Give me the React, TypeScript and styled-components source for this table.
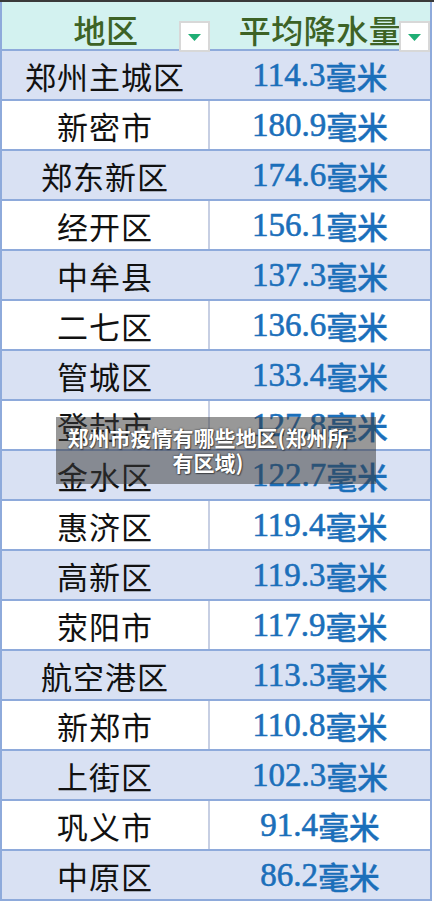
import styled, { createGlobalStyle } from "styled-components";

const GlobalStyle = createGlobalStyle`
  html, body {
    margin: 0;
    padding: 0;
    background: #ffffff;
  }
  * {
    box-sizing: border-box;
  }
`;

const lineBlue = "#8eaadb";
const rowBlue = "#d9e1f3";
const headerCyan = "#d3f2f0";

const Page = styled.div`
  position: relative;
  width: 434px;
  height: 902px;
  overflow: hidden;
  font-family: "Liberation Serif", "Noto Sans CJK SC", serif;
`;

const TopBar = styled.div`
  height: 2px;
  background: #3a3a3a;
`;

const Sheet = styled.div`
  width: 432px;
  border-left: 2px solid ${lineBlue};
  border-right: 2px solid ${lineBlue};
  display: flex;
  flex-direction: column;
`;

const HeaderRow = styled.div`
  display: grid;
  grid-template-columns: 208px 1fr;
  height: 49px;
  background: ${headerCyan};
  border-bottom: 2px solid ${lineBlue};
`;

const HeaderCell = styled.div`
  position: relative;
  display: flex;
  align-items: center;
  justify-content: center;
  padding-top: 4px;
  color: #3d6326;
  font-size: 32px;
  font-weight: 500;
  letter-spacing: 0.5px;
`;

const FilterButton = styled.div`
  position: absolute;
  right: 0;
  bottom: 0;
  width: 31px;
  height: 31px;
  background: #ffffff;
  border: 2px solid #d8d8d8;
  display: flex;
  align-items: center;
  justify-content: center;
  padding-top: 2px;
`;

const Row = styled.div<{ $shaded: boolean }>`
  display: grid;
  grid-template-columns: 208px 1fr;
  height: 50px;
  background: ${(p) => (p.$shaded ? rowBlue : "#ffffff")};
  border-bottom: 2px solid ${lineBlue};
`;

const NameCell = styled.div<{ $shaded: boolean }>`
  display: flex;
  align-items: center;
  justify-content: center;
  border-right: 2px solid ${(p) => (p.$shaded ? rowBlue : "#c7cfe3")};
  color: #111111;
  font-size: 31px;
  letter-spacing: 1px;
`;

const ValueCell = styled.div`
  display: flex;
  align-items: center;
  justify-content: center;
  color: #1b6fba;
  font-size: 33px;
  font-weight: 400;
  -webkit-text-stroke: 0.6px #1b6fba;
`;

const Unit = styled.span`
  font-size: 31px;
  font-weight: 500;
  -webkit-text-stroke: 0.3px #1b6fba;
`;

const Caption = styled.div`
  position: absolute;
  left: 56px;
  top: 417px;
  width: 320px;
  height: 67px;
  padding: 8px 24px 8px 8px;
  background: rgba(58, 58, 58, 0.52);
  color: #ffffff;
  font-family: "Noto Sans CJK SC", "Noto Sans", sans-serif;
  font-weight: 700;
  font-size: 21px;
  line-height: 25px;
  text-align: center;
  text-shadow: 0 0 2px rgba(0, 0, 0, 0.7), 1px 1px 1px rgba(0, 0, 0, 0.4);
`;

const FilterArrow = () => (
  <svg width="13" height="7" viewBox="0 0 13 7">
    <path d="M0 0 H13 L6.5 7 Z" fill="#1fae74" />
  </svg>
);

const rows: [string, string][] = [
  ["郑州主城区", "114.3"],
  ["新密市", "180.9"],
  ["郑东新区", "174.6"],
  ["经开区", "156.1"],
  ["中牟县", "137.3"],
  ["二七区", "136.6"],
  ["管城区", "133.4"],
  ["登封市", "127.8"],
  ["金水区", "122.7"],
  ["惠济区", "119.4"],
  ["高新区", "119.3"],
  ["荥阳市", "117.9"],
  ["航空港区", "113.3"],
  ["新郑市", "110.8"],
  ["上街区", "102.3"],
  ["巩义市", "91.4"],
  ["中原区", "86.2"],
];

const App = () => {
  return (
    <>
      <GlobalStyle />
      <Page>
        <TopBar />
        <Sheet>
          <HeaderRow>
            <HeaderCell>
              地区
              <FilterButton>
                <FilterArrow />
              </FilterButton>
            </HeaderCell>
            <HeaderCell>
              平均降水量
              <FilterButton>
                <FilterArrow />
              </FilterButton>
            </HeaderCell>
          </HeaderRow>
          {rows.map(([name, value], i) => {
            const shaded = i % 2 === 0;
            return (
              <Row key={name} $shaded={shaded}>
                <NameCell $shaded={shaded}>{name}</NameCell>
                <ValueCell>
                  {value}
                  <Unit>毫米</Unit>
                </ValueCell>
              </Row>
            );
          })}
        </Sheet>
        <Caption>郑州市疫情有哪些地区(郑州所有区域)</Caption>
      </Page>
    </>
  );
};

export default App;
